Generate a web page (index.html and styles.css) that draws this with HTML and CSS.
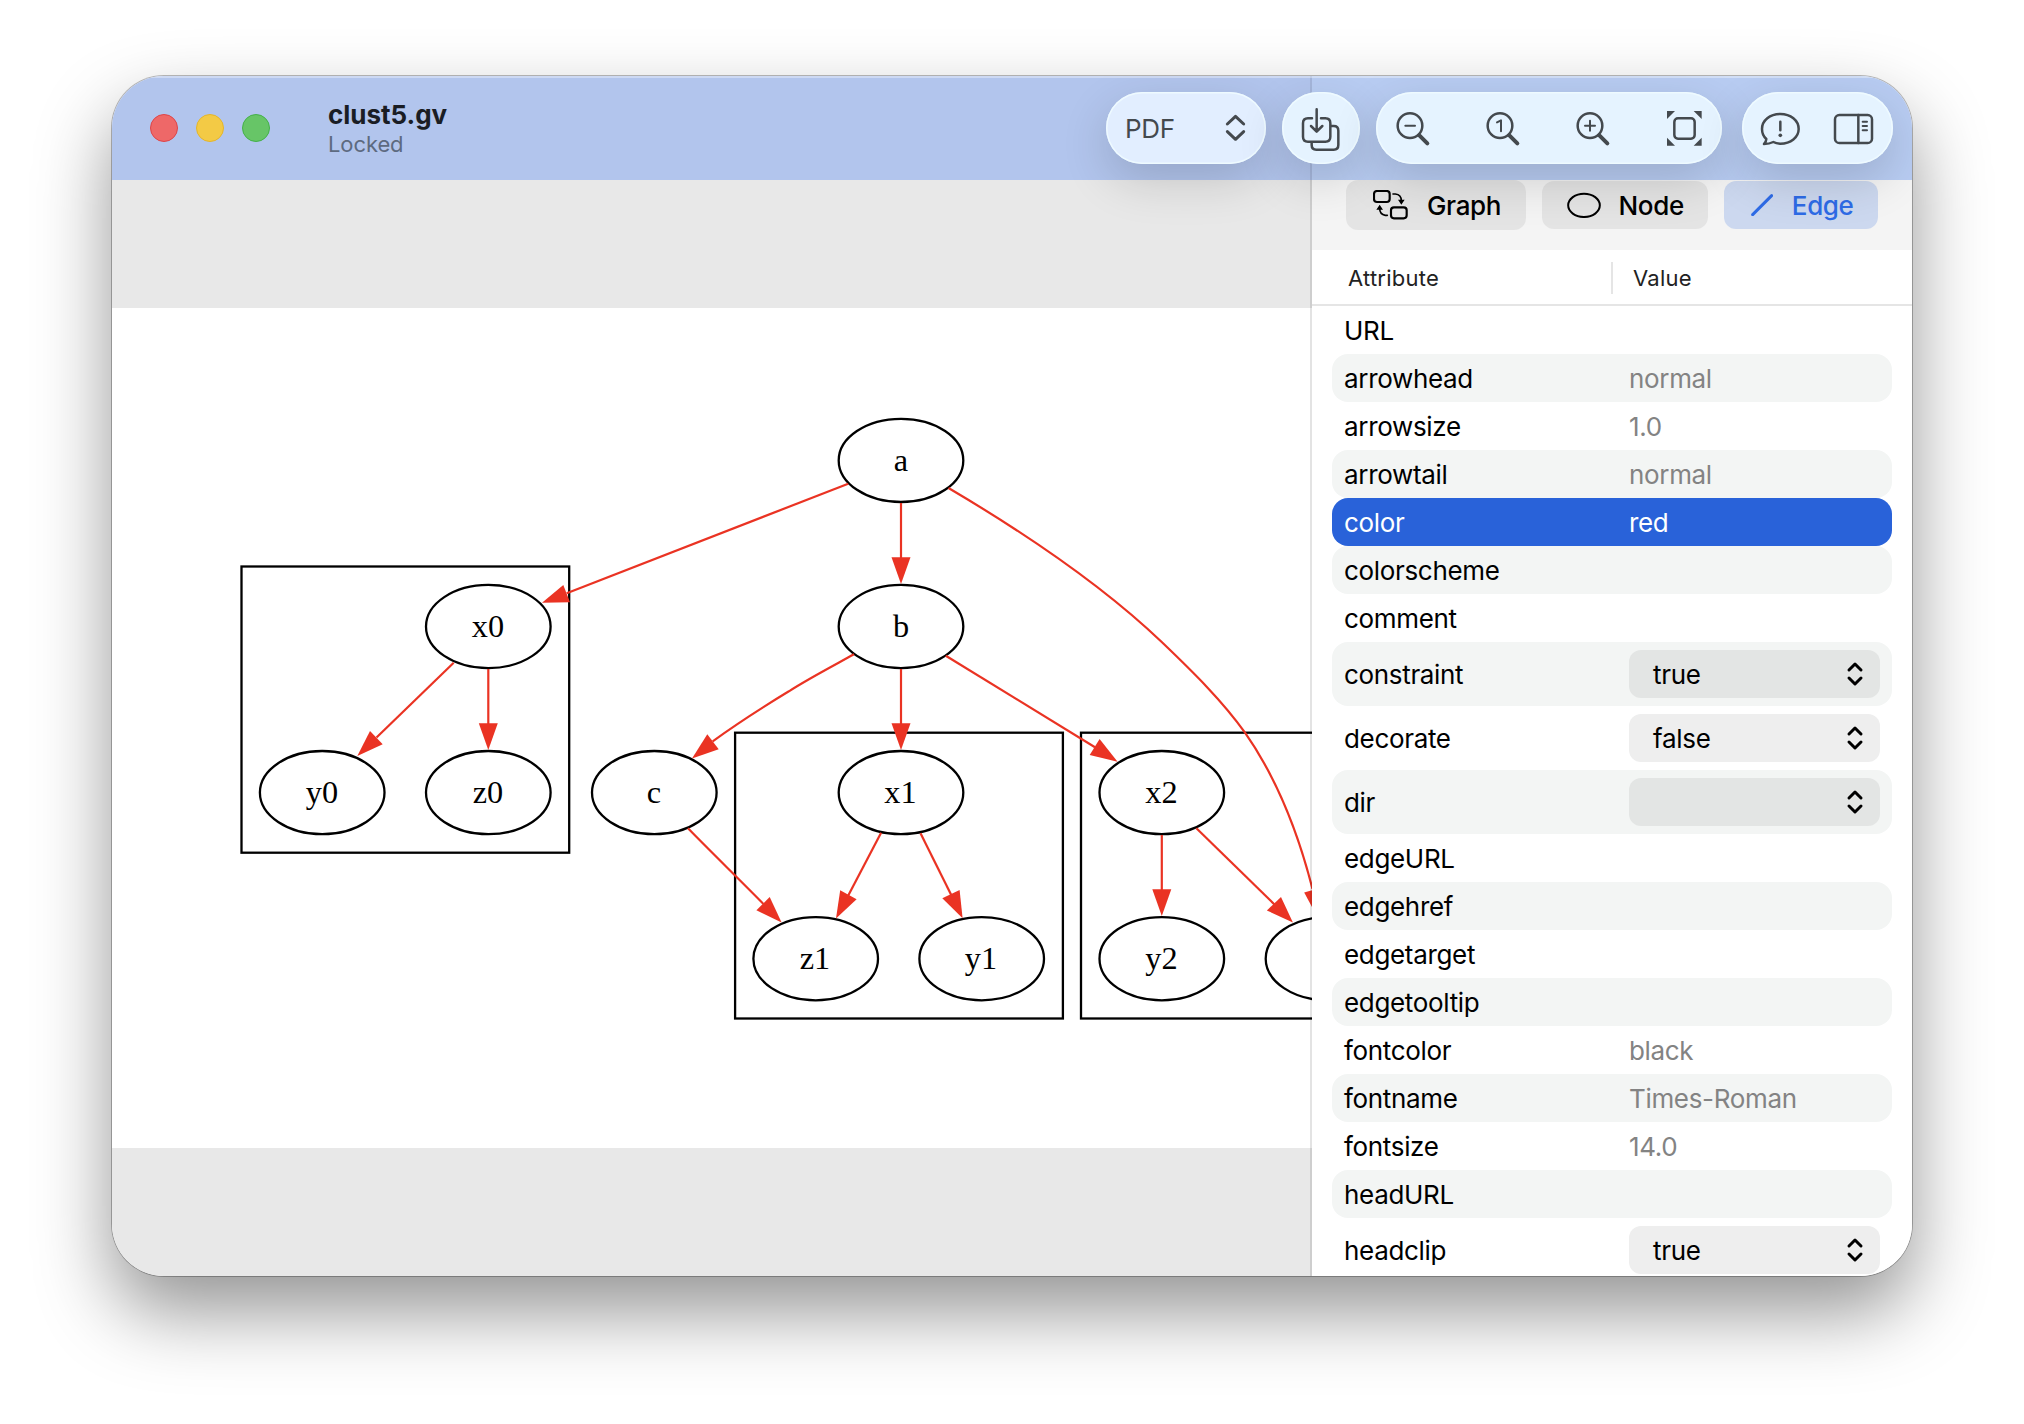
FILE: index.html
```html
<!DOCTYPE html>
<html lang="en">
<head>
<meta charset="utf-8">
<title>clust5.gv</title>
<link rel="stylesheet" href="styles.css">
</head>
<body>
<main class="window">
  <header class="titlebar">
    <div class="lights"><i class="light close"></i><i class="light minimize"></i><i class="light zoom"></i></div>
    <div class="heading">
      <h1 class="title">clust5.gv</h1>
      <p class="subtitle">Locked</p>
    </div>
    <div class="toolbar">
      <button class="pill format">
        <span class="format-label">PDF</span>
        <svg class="format-arrows" viewBox="434 132 62 88"><path d="M441 165 465.500 142 490 165M441 188 465.500 211 490 188"/></svg>
      </button>
      <button class="pill export">
        <svg class="export-icon" viewBox="606 66 234 216"><path d="M696 145H684Q669 145 669 160V200Q669 215 684 215H736Q751 215 751 200V160Q751 145 736 145H723M710 118V184M693 168 710 185 727 168M754 168H761Q775 168 775 182V225Q775 239 761 239H709Q695 239 695 225V218"/></svg>
      </button>
      <div class="pill zooms">
        <svg class="tool" viewBox="888 66 216 216"><circle cx="990" cy="167" r="37"/><path class="sign" d="M976 167H1005"/><path class="handle" d="M1018 196 1042 220"/></svg>
        <svg class="tool" viewBox="-42 66 216 216"><circle cx="60" cy="167" r="37"/><path class="sign" d="M51 157 63 151V184"/><path class="handle" d="M88 196 112 220"/></svg>
        <svg class="tool" viewBox="228 66 216 216"><circle cx="330" cy="167" r="37"/><path class="sign" d="M315 167H345M330 152V182"/><path class="handle" d="M358 196 382 220"/></svg>
        <svg class="tool" viewBox="498 66 216 216"><rect x="583" y="145" width="61" height="61" rx="11"/><path class="solid" d="M561 123H585L561 147ZM665 123H641L665 147ZM561 227H585L561 203ZM665 227H641L665 203Z"/></svg>
      </div>
      <div class="pill panels">
        <svg class="tool" viewBox="792 66 216 216"><path d="M901 132C870 132 846 151 846 177C846 189 851 200 859 207C859 213 856 217 852 222C862 222 872 220 880 216C887 220 894 221 901 221C932 221 956 202 956 177C956 151 932 132 901 132ZM901 155V181"/><circle class="solid" cx="901" cy="196" r="5.500"/></svg>
        <svg class="tool" viewBox="1014 66 216 216"><rect x="1065" y="135" width="111" height="84" rx="13"/><path d="M1135 135V219"/><path class="thin" d="M1148 155H1161M1148 168H1161M1148 181H1161"/></svg>
      </div>
    </div>
  </header>

  <div class="content">
    <section class="canvas">
      <svg class="graph" viewBox="112 308 1200 840">
        <g class="cluster">
          <rect x="241.500" y="566.500" width="327.700" height="286.200"/>
          <rect x="735.100" y="732.700" width="327.800" height="285.800"/>
          <rect x="1081" y="732.700" width="327.800" height="285.800"/>
        </g>
        <g class="node">
          <ellipse cx="901" cy="460.400" rx="62.300" ry="41.600"/>
          <ellipse cx="901" cy="626.500" rx="62.300" ry="41.600"/>
          <ellipse cx="488.300" cy="626.500" rx="62.300" ry="41.600"/>
          <ellipse cx="322.200" cy="792.600" rx="62.300" ry="41.600"/>
          <ellipse cx="488.300" cy="792.600" rx="62.300" ry="41.600"/>
          <ellipse cx="654.300" cy="792.600" rx="62.300" ry="41.600"/>
          <ellipse cx="901" cy="792.600" rx="62.300" ry="41.600"/>
          <ellipse cx="1161.800" cy="792.600" rx="62.300" ry="41.600"/>
          <ellipse cx="815.700" cy="958.700" rx="62.300" ry="41.600"/>
          <ellipse cx="981.700" cy="958.700" rx="62.300" ry="41.600"/>
          <ellipse cx="1161.800" cy="958.700" rx="62.300" ry="41.600"/>
          <ellipse cx="1328" cy="958.700" rx="62.300" ry="41.600"/>
        </g>
        <g class="edge">
          <path d="M848.200 483.700 566.700 593.300"/>
          <path d="M901 503V560"/>
          <path d="M948.500 488C1018 529 1102 585 1162 642.300C1193 672 1223 701.500 1245 732.700C1276 777 1298 832 1312.500 889"/>
          <path d="M854 654.300C831 667 808 679 788.900 691.300C763 707 738 723 712.700 741.300"/>
          <path d="M901 669V726"/>
          <path d="M945.800 655.700 1095 747.300"/>
          <path d="M453.700 662.700 376.500 737.500"/>
          <path d="M488.300 669V726"/>
          <path d="M688 828.300C711 852 737 877 763.500 904"/>
          <path d="M881.100 832.700 848 896"/>
          <path d="M920.500 833.300 951.500 895.500"/>
          <path d="M1161.800 835V891"/>
          <path d="M1196.400 828.300 1275 905"/>
        </g>
        <g class="arrow">
          <path d="M542 602.700 563.300 585 570 602.300Z"/>
          <path d="M901 584 891.500 557.300H910.500Z"/>
          <path d="M1318 918 1304.200 892.500 1323 887Z"/>
          <path d="M692 758.500 707.300 734.300 718.700 749.300Z"/>
          <path d="M901 750 891.500 723.300H910.500Z"/>
          <path d="M1117.600 761.700 1099.600 739 1089.700 755Z"/>
          <path d="M357.300 756 370 731 382.700 744.300Z"/>
          <path d="M488.300 750 478.800 723.300H497.800Z"/>
          <path d="M781.600 922.500 769.700 897 756.400 910.300Z"/>
          <path d="M836 918.500 840.200 890.300 856.600 899.300Z"/>
          <path d="M962.600 918.200 942.300 898.300 959.600 890Z"/>
          <path d="M1161.800 916 1152.300 889.200H1171.300Z"/>
          <path d="M1292.900 922.500 1281 897 1266.900 910.500Z"/>
        </g>
        <g class="label">
          <text x="901" y="470.500">a</text>
          <text x="901" y="636.700">b</text>
          <text x="488" y="636.700">x0</text>
          <text x="322" y="802.800">y0</text>
          <text x="488" y="802.800">z0</text>
          <text x="654" y="802.800">c</text>
          <text x="900.500" y="802.800">x1</text>
          <text x="1161.500" y="802.800">x2</text>
          <text x="815" y="969">z1</text>
          <text x="981" y="969">y1</text>
          <text x="1161.500" y="969">y2</text>
        </g>
      </svg>
    </section>

    <aside class="inspector">
      <nav class="tabs">
        <button class="tab graph-tab"><svg class="graph-icon" viewBox="878 362 105 90"><rect x="881" y="365" width="47" height="33" rx="9"/><rect x="932" y="414" width="47" height="33" rx="9"/><path class="thin" d="M938 374H945Q963 375 963 395M921 438H915Q898 436 898 417"/><path class="solid" d="M953 391H973L963 406ZM888 421H908L898 406Z"/></svg>Graph</button>
        <button class="tab node-tab"><svg class="node-icon" viewBox="262 367 102 80"><ellipse cx="313" cy="407" rx="47.500" ry="35"/></svg>Node</button>
        <button class="tab edge-tab"><svg class="edge-icon" viewBox="812 375 67 67"><path d="M817 437 874 380"/></svg>Edge</button>
      </nav>
      <div class="columns"><span class="column">Attribute</span><span class="column value-column">Value</span></div>
      <div class="rows">
        <div class="row"><span>URL</span></div>
        <div class="row"><span>arrowhead</span><span class="value">normal</span></div>
        <div class="row"><span>arrowsize</span><span class="value">1.0</span></div>
        <div class="row"><span>arrowtail</span><span class="value">normal</span></div>
        <div class="row selected"><span>color</span><span class="value">red</span></div>
        <div class="row"><span>colorscheme</span></div>
        <div class="row"><span>comment</span></div>
        <div class="row tall"><span>constraint</span><button class="popup">true<svg class="arrows" viewBox="0 0 18 26"><path d="M3 9 9 3 15 9M3 17 9 23 15 17"/></svg></button></div>
        <div class="row tall"><span>decorate</span><button class="popup">false<svg class="arrows" viewBox="0 0 18 26"><path d="M3 9 9 3 15 9M3 17 9 23 15 17"/></svg></button></div>
        <div class="row tall"><span>dir</span><button class="popup"><svg class="arrows" viewBox="0 0 18 26"><path d="M3 9 9 3 15 9M3 17 9 23 15 17"/></svg></button></div>
        <div class="row"><span>edgeURL</span></div>
        <div class="row"><span>edgehref</span></div>
        <div class="row"><span>edgetarget</span></div>
        <div class="row"><span>edgetooltip</span></div>
        <div class="row"><span>fontcolor</span><span class="value">black</span></div>
        <div class="row"><span>fontname</span><span class="value">Times-Roman</span></div>
        <div class="row"><span>fontsize</span><span class="value">14.0</span></div>
        <div class="row"><span>headURL</span></div>
        <div class="row tall"><span>headclip</span><button class="popup">true<svg class="arrows" viewBox="0 0 18 26"><path d="M3 9 9 3 15 9M3 17 9 23 15 17"/></svg></button></div>
      </div>
    </aside>
  </div>
</main>
</body>
</html>
```
FILE: styles.css
```css
* {
  box-sizing: border-box;
}

body {
  margin: 0;
  height: 1424px;
  padding: 76px 112px;
  overflow: hidden;
  background: #fff;
  font-family: Inter, "Liberation Sans", sans-serif;
}

button {
  border: 0;
  font: inherit;
  color: inherit;
}

svg {
  display: block;
  flex: none;
  fill: none;
  stroke: currentColor;
  stroke-linecap: round;
  stroke-linejoin: round;
}

svg .solid {
  fill: currentColor;
  stroke: none;
}

.window {
  width: 1800px;
  height: 1200px;
  display: flex;
  flex-direction: column;
  overflow: hidden;
  border-radius: 52px;
  background: #fff;
  box-shadow: 0 0 0 1px rgba(0, 0, 0, .26), 0 36px 76px rgba(0, 0, 0, .42);
}

/* Title bar */
.titlebar {
  position: relative;
  z-index: 1;
  flex: none;
  height: 104px;
  padding: 0 19px 0 38px;
  display: flex;
  background: linear-gradient(90deg, #b2c5ed 1198px, #a4b5da 1198px 1200px, #b8ccf2 1200px);
  box-shadow: inset 0 2px 0 rgba(255, 255, 255, .35);
}

.lights {
  display: flex;
  align-items: center;
  gap: 18px;
}

.light {
  width: 28px;
  height: 28px;
  border-radius: 50%;
  border: 1px solid;
}

.close { background: #ee6868; border-color: #dd4548; }
.minimize { background: #f3ca45; border-color: #e3b52c; }
.zoom { background: #67c567; border-color: #45b049; }

.heading {
  margin-left: 58px;
  padding-top: 22px;
}

.title {
  margin: 0;
  font-size: 26px;
  line-height: 34px;
  font-weight: 700;
  letter-spacing: -.02px;
  color: #1a1d24;
}

.subtitle {
  margin: 0;
  font-size: 22px;
  line-height: 24px;
  letter-spacing: -.1px;
  color: #5d6a80;
}

.toolbar {
  margin-left: auto;
  padding-top: 16px;
  display: flex;
  align-items: flex-start;
  gap: 16px;
  color: #44494e;
}

.pill {
  height: 72px;
  padding: 0;
  display: flex;
  align-items: center;
  border-radius: 36px;
  background: #e5f3ff;
  box-shadow: inset 0 0 0 1.500px #eefaff, 0 16px 48px rgba(0, 0, 0, .16);
}

.format {
  width: 160px;
  padding: 0 20px 0 19px;
  justify-content: space-between;
  background: #e2eeff;
}

.format-label {
  font-size: 26px;
  letter-spacing: -.3px;
}

.format-arrows {
  width: 20.700px;
  height: 29.300px;
  stroke-width: 9;
}

.export {
  width: 78px;
}

.export-icon {
  width: 78px;
  height: 72px;
  stroke-width: 7.500;
}

.zooms {
  width: 346px;
  gap: 18px;
}

.panels {
  width: 151px;
  margin-left: 4px;
  padding-left: 2px;
  gap: 2px;
}

.tool {
  width: 72px;
  height: 72px;
  stroke-width: 7.500;
}

.tool .handle { stroke-width: 12; }
.tool .sign { stroke-width: 6; }
.tool .thin { stroke-width: 6; }

/* Graph canvas */
.content {
  flex: 1;
  min-height: 0;
  display: flex;
}

.canvas {
  flex: none;
  width: 1200px;
  display: flex;
  align-items: center;
  background: #e8e8e8;
}

.graph {
  width: 1200px;
  height: 840px;
  background: #fff;
}

.cluster,
.node {
  stroke: #000;
  stroke-width: 2.300;
  stroke-linejoin: miter;
}

.edge {
  stroke: #ea3323;
  stroke-width: 2.200;
  stroke-linecap: butt;
}

.arrow {
  fill: #ea3323;
  stroke: none;
}

.label {
  fill: #000;
  stroke: none;
  text-anchor: middle;
  font: 32.300px "Liberation Serif", serif;
}

/* Inspector: its translucent divider lies over the canvas edge */
.inspector {
  flex: none;
  width: 602px;
  margin-left: -2px;
  border-left: 2px solid rgba(0, 0, 0, .11);
  display: flex;
  flex-direction: column;
  background: #fff;
  background-clip: padding-box;
}

.tabs {
  flex: none;
  height: 70px;
  padding: 0 34px;
  display: flex;
  gap: 16px;
  background: #f4f4f4;
  font-size: 26px;
}

.tab {
  height: 48px;
  margin-top: 1px;
  display: flex;
  align-items: center;
  border-radius: 12px;
  background: #e4e4e4;
  color: #000;
  font-weight: 500;
  letter-spacing: -.35px;
  white-space: nowrap;
}

.graph-tab {
  width: 180px;
  height: 50px;
  margin-top: 0;
  padding: 0 0 0 26.500px;
  gap: 19.500px;
}

.node-tab {
  width: 166px;
  padding: 0 0 0 25px;
  gap: 17.500px;
}

.edge-tab {
  width: 154px;
  padding: 0 0 0 26.500px;
  gap: 19px;
  background: #ccd8ef;
  color: #2e6be6;
}

.graph-icon { width: 35px; height: 30px; stroke-width: 6.500; }
.graph-icon .thin { stroke-width: 5; }
.node-icon { width: 34px; height: 26.700px; stroke-width: 6; }
.edge-icon { width: 22.300px; height: 22.300px; stroke-width: 9; }

.columns {
  flex: none;
  height: 56px;
  padding: 12px 0 10px 36px;
  display: flex;
  border-bottom: 2px solid #e5e5e5;
  font-size: 22px;
  line-height: 32px;
  letter-spacing: .25px;
  color: #222;
}

.column {
  width: 263px;
}

.value-column {
  padding-left: 20px;
  border-left: 2px solid #e5e5e5;
}

.rows {
  padding: 0 20px;
  font-size: 26px;
  letter-spacing: -.33px;
}

.row {
  height: 48px;
  padding: 1px 12px 0;
  display: grid;
  grid-template-columns: 285px 251px;
  align-items: center;
  border-radius: 16px;
}

.row:nth-child(even) {
  background: #f3f5f4;
}

.row.tall {
  height: 64px;
  padding-top: 0;
}

.value {
  color: #838383;
}

.row.selected,
.row.selected .value {
  background: #2962d9;
  color: #fff;
}

.popup {
  height: 48px;
  padding: 0 16px 0 24px;
  display: flex;
  align-items: center;
  border-radius: 12px;
  background: #eee;
  color: #000;
  letter-spacing: -.3px;
}

.row:nth-child(even) .popup {
  background: #e3e5e4;
}

.arrows {
  width: 18px;
  height: 26px;
  margin-left: auto;
  stroke-width: 3;
}
```
